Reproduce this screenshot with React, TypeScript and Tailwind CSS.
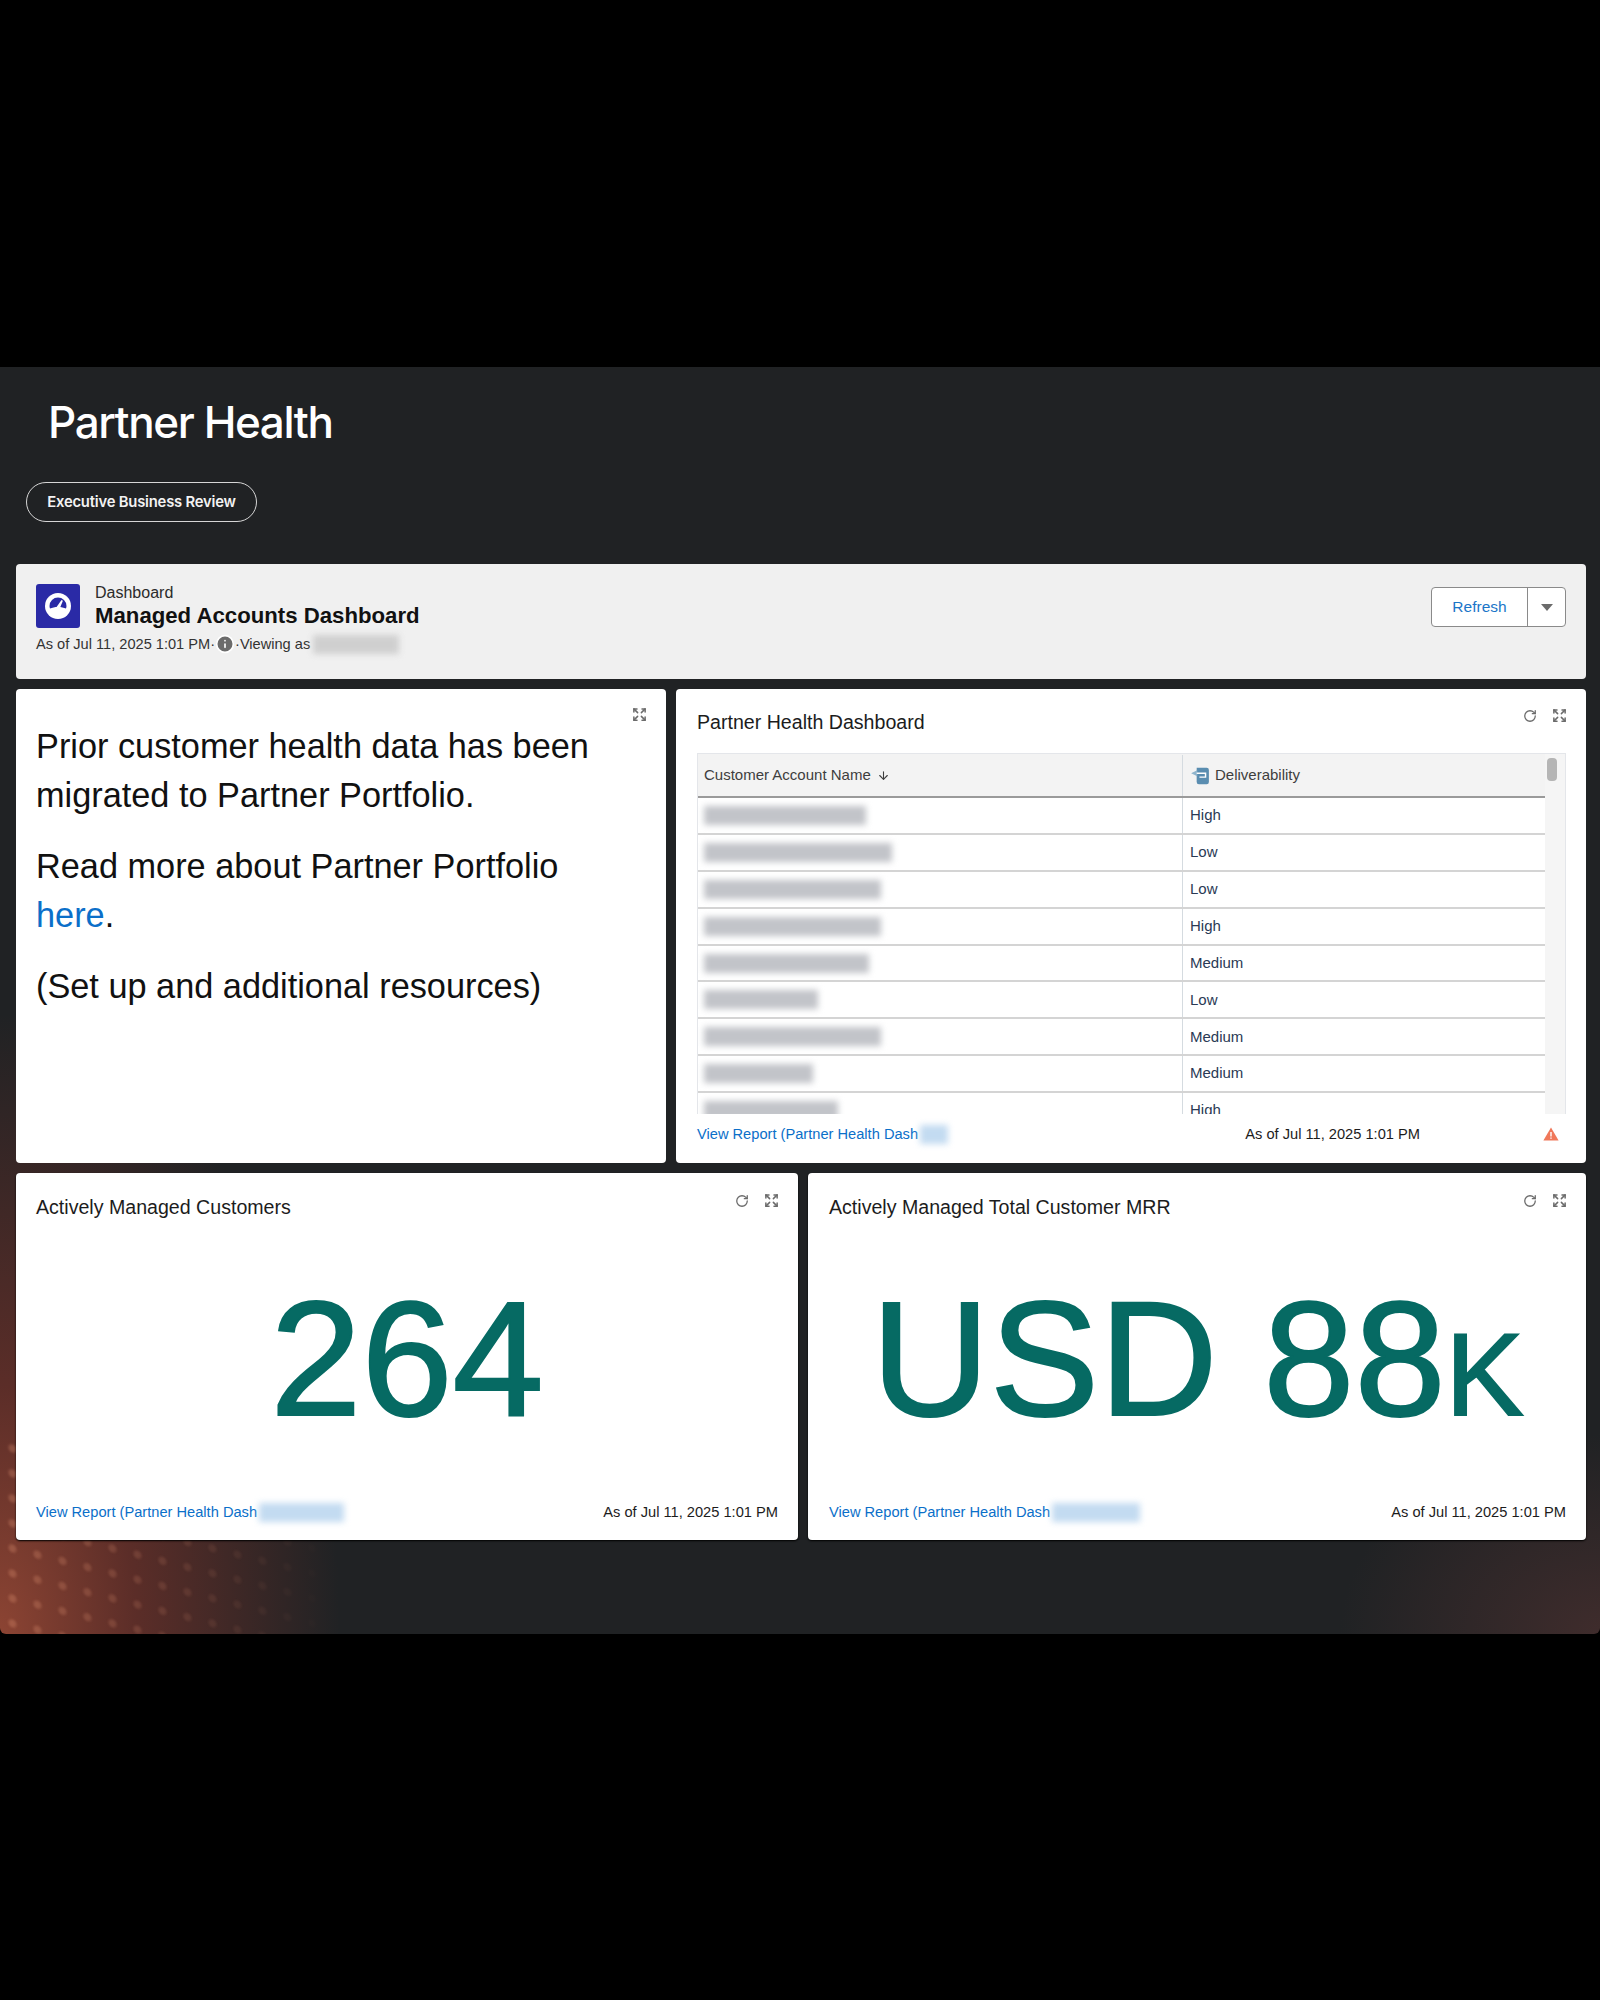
import { RotateCw, Expand, ArrowDown, Info } from "lucide-react";

const rows = [
  { name: 162, value: "High" },
  { name: 188, value: "Low" },
  { name: 177, value: "Low" },
  { name: 177, value: "High" },
  { name: 165, value: "Medium" },
  { name: 114, value: "Low" },
  { name: 177, value: "Medium" },
  { name: 109, value: "Medium" },
  { name: 134, value: "High" },
];

// redacted text in the original is a blurred smear
function Smear({ width, tint = "bg-[#c2c4c9]" }: { width: number; tint?: string }) {
  return <div className={`h-[19px] blur-[3px] ${tint}`} style={{ width }} />;
}

function CardIcons({ refresh = true }: { refresh?: boolean }) {
  return (
    <div className="-mr-[1px] flex items-center gap-[15px] text-[#6b6b6b]">
      {refresh && <RotateCw size={14} strokeWidth={2.2} />}
      <Expand size={15} strokeWidth={2.4} />
    </div>
  );
}

function DashboardIcon() {
  return (
    <div className="flex h-[44px] w-[44px] shrink-0 items-center justify-center rounded-[3px] bg-[#2a2aa6]">
      <svg viewBox="0 0 28 28" className="h-[28px] w-[28px]">
        <circle cx="14" cy="14" r="13" fill="#fff" />
        <path d="M5.5 14a8.5 8.5 0 0 1 17 0c0 1-.2 1.8-.5 2.6-2.2-1-4.8-1.6-8-1.6s-5.8.6-8 1.6c-.3-.8-.5-1.6-.5-2.6z" fill="#2a2aa6" />
        <path d="M11.5 16.5l6-8.5 1.4.8-3.9 9.4z" fill="#fff" />
      </svg>
    </div>
  );
}

function WarningIcon() {
  return (
    <svg viewBox="0 0 16 14" className="h-[14px] w-[16px]">
      <path d="M8 .5l7.6 13H.4z" fill="#f0785a" />
      <path d="M8 5v4.5M8 10.6v1.2" stroke="#fff" strokeWidth="1.4" />
    </svg>
  );
}

function CardFooter({ smear, warning }: { smear: number; warning?: boolean }) {
  return (
    <div className="flex items-center text-[14.65px] leading-[20px]">
      <div className="flex items-center gap-[2px] text-[#0b6fc9]">
        <span>View Report (Partner Health Dash</span>
        <Smear width={smear} tint="bg-[#c3dbf1]" />
      </div>
      <span className="ml-auto text-[#1c1c1c]">As of Jul 11, 2025 1:01 PM</span>
      {warning && (
        <span className="mr-[7px] ml-[123px]">
          <WarningIcon />
        </span>
      )}
    </div>
  );
}

function MetricCard({
  title,
  children,
  smear,
  padLeft = "pl-[20px]",
}: {
  title: string;
  children: React.ReactNode;
  smear: number;
  padLeft?: string;
}) {
  return (
    <div className={`flex h-[367px] flex-col rounded-[4px] bg-white pt-[20px] pr-[20px] pb-[18px] shadow-[0_1px_2px_#000] ${padLeft}`}>
      <div className="flex items-start justify-between">
        <h2 className="text-[19.6px] leading-[28px] text-[#1c1c1c]">{title}</h2>
        <CardIcons />
      </div>
      <div className="flex flex-1 items-center justify-center pb-[6px] text-[164px] leading-none text-[#066a63] [-webkit-text-stroke:2px_#066a63]">
        {children}
      </div>
      <CardFooter smear={smear} />
    </div>
  );
}

export default function App() {
  return (
    <div className="min-h-[2000px] bg-black pt-[367px] font-['Liberation_Sans',Arial,sans-serif]">
      <div className="relative h-[1267px] overflow-hidden rounded-b-[6px] bg-[#202224] bg-[radial-gradient(ellipse_340px_620px_at_0%_100%,#8c4433_0%,#6a3029cc_40%,transparent_100%),radial-gradient(ellipse_260px_200px_at_100%_100%,#3f2c2c_0%,transparent_100%)] pr-[14px] pl-[16px]">
        {/* dot texture of the page background */}
        <div className="absolute -bottom-[50px] left-0 h-[210px] w-[330px] skew-y-[14deg] bg-[radial-gradient(circle,#e89a78_0_3px,transparent_5px)] bg-[length:25px_25px] opacity-30 blur-[1px] [mask-image:linear-gradient(to_right,black,transparent)]" />

        <div className="relative">
          <h1 className="pt-[25px] pl-[32px] font-['Inter',sans-serif] text-[44px] leading-[60px] font-medium tracking-[-1.4px] text-white">
            Partner Health
          </h1>
          <div className="mt-[30px] ml-[10px] flex h-[40px] w-[231px] items-center justify-center rounded-full border-[1.5px] border-[#d6d6d6] font-['Inter',sans-serif] text-[14.8px] font-semibold tracking-[-0.2px] text-[#f3f3f3]">
            Executive Business Review
          </div>

          <div className="mt-[42px] flex h-[115px] justify-between rounded-[4px] bg-[#f0f0f0] px-[20px] pt-[20px]">
            <div>
              <div className="flex gap-[15px]">
                <DashboardIcon />
                <div>
                  <div className="text-[16px] leading-[18px] text-[#2b2b2b]">Dashboard</div>
                  <div className="text-[22.2px] leading-[27px] font-bold text-[#111]">Managed Accounts Dashboard</div>
                </div>
              </div>
              <div className="mt-[5px] flex items-center text-[14.6px] leading-[20px] text-[#333]">
                <span>As of Jul 11, 2025 1:01 PM·</span>
                <Info size={20} fill="#6b6b6b" stroke="#fff" strokeWidth={2} />
                <span>·Viewing as</span>
                <Smear width={86} tint="ml-[3px] bg-[#cfcfcf]" />
              </div>
            </div>
            <div className="mt-[3px] flex h-[40px] rounded-[4px] border border-[#8a8a8a] bg-white">
              <div className="flex w-[96px] items-center justify-center border-r border-[#8a8a8a] text-[15.5px] text-[#1b76c8]">
                Refresh
              </div>
              <div className="flex w-[37px] items-center justify-center">
                <div className="h-0 w-0 border-x-[6px] border-t-[7px] border-x-transparent border-t-[#6b6b6b]" />
              </div>
            </div>
          </div>

          <div className="mt-[10px] grid grid-cols-[650px_910px] gap-[10px]">
            <div className="h-[474px] rounded-[4px] bg-white pt-[18px] pr-[50px] pl-[20px] text-[34.3px] leading-[49px] text-[#111]">
              <div className="-mr-[30px] flex justify-end">
                <CardIcons refresh={false} />
              </div>
              <p>Prior customer health data has been migrated to Partner Portfolio.</p>
              <p className="mt-[22px]">
                Read more about Partner Portfolio <span className="text-[#0b6fc9]">here</span>.
              </p>
              <p className="mt-[22px]">(Set up and additional resources)</p>
            </div>

            <div className="flex h-[474px] flex-col rounded-[4px] bg-white pt-[19px] pr-[20px] pl-[21px]">
              <div className="flex items-start justify-between">
                <h2 className="text-[19.6px] leading-[28px] text-[#1c1c1c]">Partner Health Dashboard</h2>
                <CardIcons />
              </div>
              <div className="mt-[17px] flex h-[361px] overflow-hidden border-x border-t border-[#e4e6ea]">
                <div className="flex-1">
                  <div className="flex h-[44px] border-b-2 border-[#9a9a9a] bg-[#f3f3f3] pt-[1px] text-[15px] text-[#3e3e3e]">
                    <div className="flex w-[485px] items-center gap-[6px] border-r border-[#d5dbe0] pl-[6px]">
                      Customer Account Name
                      <ArrowDown size={13} strokeWidth={2} />
                    </div>
                    <div className="flex items-center gap-[5px] pl-[7px]">
                      <svg viewBox="0 0 18 18" className="h-[20px] w-[20px]">
                        <path d="M6 1.5h9a2 2 0 0 1 2 2v11a2 2 0 0 1-2 2H8a2 2 0 0 1-2-2z" fill="#5a8db0" />
                        <path d="M1 6.5L6.5 3.8v5.4z" fill="#8fb4cc" />
                        <path d="M6 6.5h8v3.5H8.5" fill="none" stroke="#fff" strokeWidth="1.3" />
                      </svg>
                      Deliverability
                    </div>
                  </div>
                  {rows.map((row, i) => (
                    <div key={i} className="flex h-[36.9px] border-b-2 border-[#d4d4d4] text-[15px] text-[#2a3a55]">
                      <div className="flex w-[485px] items-center border-r border-[#d5dbe0] pl-[6px]">
                        <Smear width={row.name} />
                      </div>
                      <div className="flex items-center pl-[7px]">{row.value}</div>
                    </div>
                  ))}
                </div>
                <div className="w-[20px] shrink-0 bg-[#f5f5f5] px-[2px] pt-[4px]">
                  <div className="h-[23px] w-[10px] rounded-[4px] bg-[#b5b5b5]" />
                </div>
              </div>
              <div className="mt-[10px]">
                <CardFooter smear={28} warning />
              </div>
            </div>
          </div>

          <div className="mt-[10px] grid grid-cols-[782px_778px] gap-[10px]">
            <MetricCard title="Actively Managed Customers" smear={85}>
              264
            </MetricCard>
            <MetricCard title="Actively Managed Total Customer MRR" smear={88} padLeft="pl-[21px]">
              <span>
                USD 88<span className="text-[117px]">K</span>
              </span>
            </MetricCard>
          </div>
        </div>
      </div>
    </div>
  );
}
